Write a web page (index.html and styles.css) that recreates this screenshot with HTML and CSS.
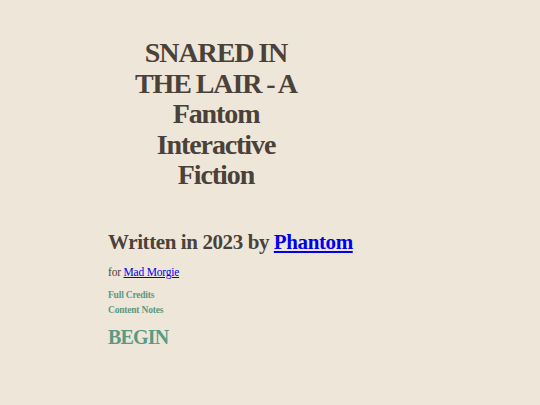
FILE: index.html
```html
<!DOCTYPE html>
<html>
<head>
<meta charset="utf-8">
<link rel="stylesheet" href="styles.css">
</head>
<body>
<main class="page">
  <h1 class="title">SNARED IN THE LAIR - A Fantom Interactive Fiction</h1>
  <h2 class="byline">Written in 2023 by <a href="#">Phantom</a></h2>
  <p class="for">for <a href="#">Mad Morgie</a></p>
  <ul class="links">
    <li>Full Credits</li>
    <li>Content Notes</li>
  </ul>
  <div class="begin">BEGIN</div>
</main>
</body>
</html>
```
FILE: styles.css
```css
html, body {
  margin: 0;
  padding: 0;
  background: #efe6da;
}
body {
  font-family: "Liberation Serif", serif;
  color: #4a4239;
}
.page {
  padding: 38px 0 0 108px;
  display: flex;
  flex-direction: column;
  align-items: flex-start;
}
.title {
  box-sizing: border-box;
  width: 216px;
  padding: 0 18px;
  margin: 0;
  text-align: center;
  font-size: 28px;
  line-height: 30.5px;
  font-weight: bold;
  letter-spacing: -1.1px;
  word-spacing: -1px;
}
.byline {
  margin: 38px 0 0;
  font-size: 21px;
  line-height: 26px;
  font-weight: bold;
  letter-spacing: -0.4px;
}
.byline a {
  color: #0000ee;
}
.for {
  margin: 11px 0 0;
  font-size: 11.5px;
  line-height: 12px;
  letter-spacing: -0.2px;
}
.for a {
  color: #0000ee;
}
.links {
  list-style: none;
  margin: 10px 0 0;
  padding: 0;
  color: #5a9a83;
  font-size: 9.5px;
  line-height: 15px;
  font-weight: bold;
  letter-spacing: -0.2px;
}
.begin {
  margin-top: 8px;
  color: #5a9a83;
  font-size: 20px;
  line-height: 22px;
  font-weight: bold;
  letter-spacing: -0.8px;
}
```
